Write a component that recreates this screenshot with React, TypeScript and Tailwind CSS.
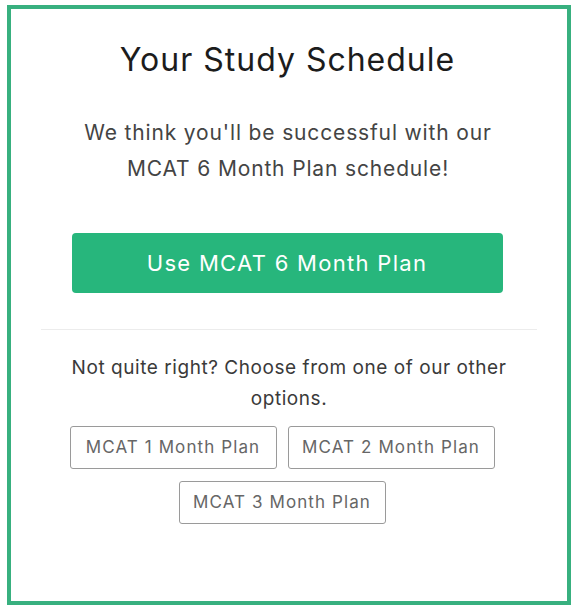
import React from "react";

export default function App() {
  const font = { fontFamily: "Inter, 'Noto Sans', sans-serif" };
  return (
    <div className="w-[576px] h-[609px] bg-white pt-[5px] pl-[7px]" style={font}>
      <div className="w-[564px] h-[600px] border-4 border-[#38b07f] flex flex-col items-center pt-[31px]">
        <h1 className="mr-[3px] text-[32px] leading-[40px] text-[#1c1c1c] font-normal tracking-[1px]">Your Study Schedule</h1>
        <p className="mt-[35px] mr-[2px] text-[21px] leading-[36px] text-[#444] text-center tracking-[0.85px]">
          We think you'll be successful with our
          <br />
          MCAT 6 Month Plan schedule!
        </p>
        <button className="mt-[46px] mr-[4px] w-[431px] h-[60px] rounded-[4px] bg-[#27b67c] text-white text-[22px] tracking-[1.3px]">
          Use MCAT 6 Month Plan
        </button>
        <div className="mt-[36px] w-[496px] h-px bg-[#ececec]" />
        <p className="mt-[22px] w-[460px] text-[19px] leading-[31px] text-[#3a3a3a] text-center tracking-[0.55px]">
          Not quite right? Choose from one of our other options.
        </p>
        <div className="mt-[12px] mr-[14px] flex flex-wrap justify-center gap-x-[11px] gap-y-[12px] w-[430px]">
          {["MCAT 1 Month Plan", "MCAT 2 Month Plan", "MCAT 3 Month Plan"].map((t) => (
            <button
              key={t}
              className="w-[207px] h-[43px] rounded-[3px] border border-[#9a9a9a] text-[17px] text-[#666] tracking-[1.1px]"
            >
              {t}
            </button>
          ))}
        </div>
      </div>
    </div>
  );
}
